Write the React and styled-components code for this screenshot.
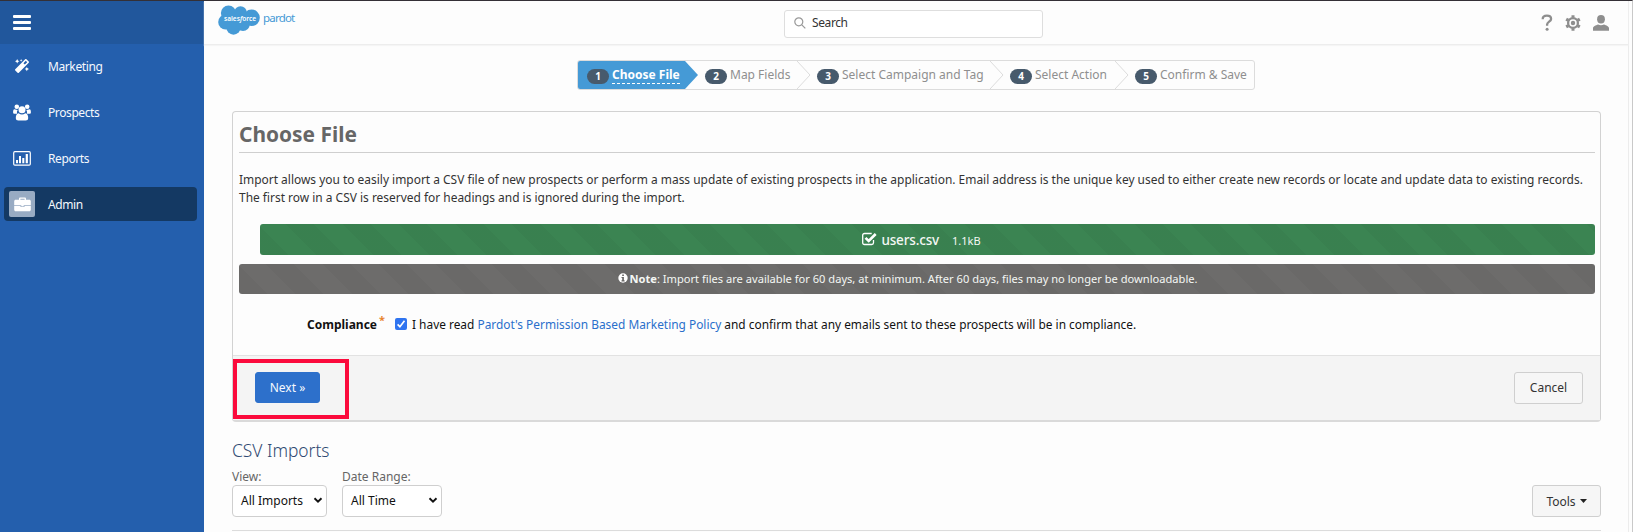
import React from "react";
import styled, { createGlobalStyle, css } from "styled-components";
import { FaMagic } from "react-icons/fa";

const Global = createGlobalStyle`
  * { box-sizing: border-box; }
  html, body { margin: 0; padding: 0; }
  body {
    background: #fdfdfd;
    color: #333;
    font-family: "Noto Sans", sans-serif;
    font-size: 12px;
    overflow: hidden;
  }
  #root { height: 532px; }
`;

const Window = styled.div`
  display: flex;
  height: 532px;
  border-top: 1px solid #343036;
  border-right: 1px solid #c9c9c9;
`;

const Sidebar = styled.aside`
  width: 204px;
  flex: none;
  background: #245fad;
`;

const SidebarTop = styled.div`
  height: 43px;
  padding: 14px 0 0 13px;
  background: #21579c;
`;

const Nav = styled.nav`
  display: flex;
  flex-direction: column;
  gap: 12px;
  padding: 5px 7px 0 4px;
`;

const NavItem = styled.a`
  display: flex;
  align-items: center;
  height: 34px;
  padding-left: 5px;
  border-radius: 4px;
  color: #f4f8fd;
  font-size: 12px;
  letter-spacing: -0.4px;
  background: ${(p) => (p.$active ? "#143963" : "transparent")};
`;

const NavIcon = styled.span`
  display: flex;
  align-items: center;
  justify-content: center;
  width: 26px;
  height: 26px;
  margin-right: 13px;
  border-radius: 2px;
  color: #fff;
  background: ${(p) => (p.$active ? "#98abc3" : "transparent")};
`;

const Main = styled.div`
  flex: 1;
  min-width: 0;
  margin-right: 3px;
  border-right: 1px solid #ececec;
`;

const TopBar = styled.header`
  display: flex;
  align-items: center;
  height: 44px;
  padding: 0 19px 0 14px;
  border-bottom: 1px solid #ededed;
  box-shadow: 0 1px 1px #f5f5f5;
`;

const Brand = styled.div`
  display: flex;
  width: 566px;
  height: 30px;
  margin-top: -5px;
`;

const Product = styled.span`
  margin: 5px 0 0 2px;
  color: #459ad6;
  font-size: 11.5px;
  letter-spacing: -0.8px;
  line-height: 16px;
`;

const SearchBox = styled.div`
  display: flex;
  align-items: center;
  gap: 6px;
  width: 259px;
  height: 28px;
  margin-top: 2px;
  padding: 0 0 2px 9px;
  letter-spacing: -0.4px;
  border: 1px solid #dedede;
  border-radius: 3px;
  background: #fff;
`;

const TopActions = styled.div`
  display: flex;
  align-items: center;
  margin-left: auto;
  gap: 12px;
  color: #8e8e8e;
`;

const Content = styled.main`
  padding: 15px 27px 0 28px;
`;

const Steps = styled.ol`
  display: flex;
  width: 678px;
  height: 30px;
  margin: 0 0 0 345px;
  padding: 0;
  list-style: none;
  border: 1px solid #dcdcdc;
  border-radius: 3px;
  background: #fdfdfd;
  overflow: hidden;
`;

const Step = styled.li`
  display: flex;
  align-items: center;
  width: ${(p) => p.$width}px;
  padding-left: ${(p) => (p.$active ? 9 : 6)}px;
  gap: 3px;
  color: ${(p) => (p.$active ? "#fff" : "#8f8f8f")};
  background: ${(p) => (p.$active ? "#459ad6" : "transparent")};
  white-space: nowrap;
`;

const StepNumber = styled.span`
  width: 22px;
  height: 15px;
  margin-top: 2px;
  border-radius: 8px;
  background: #475a6c;
  color: #fff;
  font-size: 10px;
  font-weight: 700;
  line-height: 15px;
  text-align: center;
`;

const StepLabel = styled.span`
  font-size: 12px;
  line-height: 16px;
  ${(p) =>
    p.$active &&
    css`
      font-weight: 700;
      margin-top: 1px;
      border-bottom: 1px dashed #fff;
    `}
`;

const Card = styled.section`
  margin-top: 21px;
  height: 311px;
  display: flex;
  flex-direction: column;
  border: 1px solid #d2d2d2;
  border-bottom: 2px solid #dadada;
  border-radius: 4px;
`;

const CardBody = styled.div`
  flex: 1;
  padding: 0 5px 0 6px;
`;

const CardTitle = styled.h1`
  height: 41px;
  margin: 0 0 17px;
  padding-top: 7px;
  border-bottom: 1px solid #cfcfcf;
  color: #666;
  font-size: 20.900px;
  line-height: 30px;
  font-weight: 700;
`;

const Intro = styled.p`
  margin: 0;
  font-size: 11.94px;
  line-height: 18px;
  white-space: nowrap;
`;

const Banner = styled.div`
  display: flex;
  align-items: center;
  justify-content: center;
  height: ${(p) => p.$height}px;
  margin: ${(p) => p.$margin};
  padding: 0 ${(p) => p.$inset}px 2px 0;
  border-radius: 3px;
  color: #f4f7f4;
  background-color: ${(p) => p.$color};
  background-image: repeating-linear-gradient(
    45deg,
    rgba(0, 0, 0, 0.03) 0 20px,
    transparent 20px 40px
  );
`;

const FileName = styled.span`
  margin: 2px 0 0 4px;
  font-size: 13.5px;
  letter-spacing: -0.15px;
  font-weight: 500;
`;

const FileSize = styled.span`
  margin: 4px 0 0 13px;
  font-size: 11px;
`;

const Note = styled.span`
  margin-left: 2px;
  font-size: 11.12px;
`;

const Compliance = styled.div`
  display: flex;
  align-items: center;
  height: 18px;
  margin-top: 21px;
  padding-left: 68px;
  color: #111;
  font-size: 12px;
  white-space: nowrap;
`;

const Required = styled.span`
  align-self: flex-start;
  width: 18px;
  padding-left: 2px;
  margin-top: -2px;
  color: #e8832c;
  font-size: 11px;
  font-weight: 700;
  line-height: 14px;
`;

const Check = styled.span`
  display: flex;
  width: 12px;
  height: 12px;
  margin-right: 5px;
  border-radius: 2px;
  background: #2f74f0;
`;

const Consent = styled.span`
  font-size: 11.9px;
`;

const Link = styled.a`
  color: #2a6fcb;
`;

const CardFooter = styled.footer`
  position: relative;
  display: flex;
  align-items: center;
  justify-content: space-between;
  height: 65px;
  padding: 0 17px 1px 22px;
  border-top: 1px solid #e2e2e2;
  background: #f4f4f4;
`;

const Highlight = styled.div`
  position: absolute;
  left: 0;
  top: 3px;
  width: 116px;
  height: 60px;
  border: 4px solid #fb0a3c;
`;

const Button = styled.button`
  display: flex;
  align-items: center;
  justify-content: center;
  gap: 4px;
  width: ${(p) => p.$width}px;
  height: ${(p) => (p.$primary ? 31 : 32)}px;
  padding: 0;
  border: 1px solid ${(p) => (p.$primary ? "#2d70cb" : "#cfcfcf")};
  border-radius: 3px;
  background: ${(p) => (p.$primary ? "#2d70cb" : "#f6f6f6")};
  color: ${(p) => (p.$primary ? "#f4f8fd" : "#333")};
  font-family: inherit;
  font-size: 12px;
`;

const ListTitle = styled.h2`
  margin: 15px 0 0;
  color: #304a72;
  font-size: 17.4px;
  line-height: 26px;
  font-weight: 300;
`;

const Filters = styled.div`
  display: flex;
  align-items: flex-end;
  gap: 15px;
  height: 68px;
  padding-bottom: 13px;
  border-bottom: 1px solid #dcdcdc;
`;

const Field = styled.label`
  display: flex;
  flex-direction: column;
  width: ${(p) => p.$width}px;
  color: #666;
  font-size: 12px;
  line-height: 17px;
`;

const SelectBox = styled.span`
  display: flex;
  align-items: center;
  justify-content: space-between;
  height: 32px;
  padding: 0 3px 1px 8px;
  border: 1px solid #cfcfcf;
  border-radius: 4px;
  background: #fff;
  color: #111;
`;

const Spacer = styled.div`
  flex: 1;
`;

const MenuIcon = () => (
  <svg width="18" height="15" viewBox="0 0 18 15" fill="#fff">
    <rect width="18" height="3" rx="1" />
    <rect y="6" width="18" height="3" rx="1" />
    <rect y="12" width="18" height="3" rx="1" />
  </svg>
);

const PeopleIcon = () => (
  <svg width="18" height="17" viewBox="0 0 18 17" fill="currentColor">
    <circle cx="3.8" cy="2.8" r="2.3" />
    <circle cx="14.2" cy="2.8" r="2.3" />
    <path d="M1.5 5.3C.3 5.5.1 7 .1 8.300c0 1 .5 1.500 1.500 1.500h2.600c-.5-1.300-.3-2.700.6-3.800-1.200 0-2.200-.4-3.300-.7zM16.500 5.300c1.200.2 1.400 1.700 1.400 3 0 1-.5 1.500-1.500 1.500h-2.600c.5-1.300.3-2.700-.6-3.800 1.200 0 2.200-.4 3.300-.7z" />
    <circle cx="9" cy="5.800" r="3.500" />
    <path d="M5.700 9.200c1.900 1.600 4.700 1.600 6.600 0 2.100.1 2.900 2 2.900 4.800 0 1.700-1 2.500-2.500 2.500H5.300c-1.500 0-2.500-.8-2.500-2.500 0-2.800.8-4.700 2.900-4.800z" />
  </svg>
);

const ReportIcon = () => (
  <svg width="18" height="15" viewBox="0 0 18 15" fill="currentColor">
    <rect x=".7" y=".7" width="16.600" height="13.400" rx="1.200" fill="none" stroke="currentColor" strokeWidth="1.200" />
    <path d="M3 9h2v3.200H3zM6 5h2v7.200H6zM9.300 7h2v5.200h-2zM12.700 3h2.200v9.200h-2.200z" />
  </svg>
);

const CaseIcon = () => (
  <svg width="17" height="15" viewBox="0 0 17 15" fill="currentColor">
    <path d="M5 2.800V1.700C5 .9 5.500.4 6.300.4h4.400c.8 0 1.300.5 1.300 1.300v1.100h3.300c.9 0 1.500.6 1.500 1.500v3.900H.2V4.300c0-.9.600-1.500 1.500-1.500zm1.400 0h4.200v-1H6.400z" />
    <path d="M.2 8.900h6.300v1.200h4V8.900h6.300v3.900c0 .9-.6 1.500-1.500 1.500H1.700c-.9 0-1.500-.6-1.500-1.500z" />
    <path d="M7.300 8h2.400v1.400H7.300z" />
  </svg>
);

const CloudLogo = () => (
  <svg width="43" height="30" viewBox="0 0 43 30">
    <g fill="#459ad6">
      <circle cx="10.500" cy="8" r="7.600" />
      <circle cx="22.500" cy="7.500" r="6.300" />
      <circle cx="33.500" cy="12.800" r="8.300" />
      <circle cx="7.600" cy="17" r="7.400" />
      <circle cx="15.500" cy="22.500" r="7.200" />
      <circle cx="25" cy="19.300" r="6.800" />
      <path d="M8 8h26v12H8z" />
    </g>
    <text x="22" y="16.300" textAnchor="middle" fill="#fff" fontSize="6.800" fontWeight="600" fontFamily="Noto Sans, sans-serif" textLength="32" lengthAdjust="spacingAndGlyphs">
      sales<tspan fontStyle="italic">f</tspan>orce
    </text>
  </svg>
);

const SearchIcon = () => (
  <svg width="12" height="12" viewBox="0 0 12 12" fill="none" stroke="#999" strokeWidth="1.200">
    <circle cx="4.800" cy="4.800" r="4" />
    <path d="M7.800 7.800l3.500 3.500" />
  </svg>
);

const HelpIcon = () => (
  <svg width="12" height="17" viewBox="0 0 12 17" fill="none" stroke="currentColor" strokeWidth="2.300">
    <path d="M1.700 5.200C1.700 2.800 3.400 1.700 5.900 1.700S10.100 2.900 10.100 4.900c0 2.700-4 2.900-4 5.700v1.200" />
    <circle cx="6.100" cy="15.200" r="1.500" fill="currentColor" stroke="none" />
  </svg>
);

const GearIcon = () => (
  <svg width="16" height="16" viewBox="0 0 16 16" fill="none" stroke="currentColor">
    <circle cx="8" cy="8" r="4.900" strokeWidth="2.300" />
    <circle cx="8" cy="8" r="2.200" fill="currentColor" stroke="none" />
    <path d="M8 .2v2.500M8 13.300v2.500M1.200 4.100l2.200 1.300M12.600 10.600l2.200 1.300M1.200 11.900l2.200-1.300M12.600 5.400l2.200-1.300" strokeWidth="3" />
  </svg>
);

const PersonIcon = () => (
  <svg width="16" height="16" viewBox="0 0 16 16" fill="currentColor">
    <ellipse cx="8" cy="4.200" rx="3.900" ry="4.200" />
    <path d="M0 15.800v-2.600c0-2 2.700-3 5.100-3.800 1.700 1 4.100 1 5.800 0 2.400.8 5.100 1.800 5.100 3.800v2.600z" />
  </svg>
);

const StepArrow = ({ filled }) => (
  <svg width="14" height="28" viewBox="0 0 14 28">
    {filled ? (
      <path d="M0 0l13 14L0 28z" fill="#459ad6" />
    ) : (
      <path d="M0 0l13 14L0 28" fill="none" stroke="#dcdcdc" />
    )}
  </svg>
);

const CheckedBoxIcon = () => (
  <svg width="15" height="14" viewBox="0 0 15 14" fill="none" stroke="#fff">
    <path d="M11.500 8v2.700c0 1.100-.7 1.800-1.800 1.800H2.500C1.400 12.500.7 11.800.7 10.700V3.300c0-1.100.7-1.800 1.800-1.800h7.200" strokeWidth="1.300" />
    <path d="M3.500 5.800l3.200 3.200 7-7" strokeWidth="2.600" />
  </svg>
);

const InfoIcon = () => (
  <svg width="10" height="10" viewBox="0 0 10 10">
    <circle cx="5" cy="5" r="4.700" fill="#fff" />
    <path d="M4.200 1.500h1.700v1.400H4.200zM3.500 4h2.400v3.300h.7v1.100H3.500V7.300h.7V5.100h-.7z" fill="#686766" />
  </svg>
);

const Tick = () => (
  <svg width="12" height="12" viewBox="0 0 11 11" fill="none" stroke="#fff" strokeWidth="1.500">
    <path d="M2.400 5.800l2.100 2.200 4.200-5.500" />
  </svg>
);

const Chevron = () => (
  <svg width="10" height="7" viewBox="0 0 10 7" fill="none" stroke="#111" strokeWidth="1.900">
    <path d="M1.500 1.300L5 4.700l3.500-3.400" />
  </svg>
);

const Caret = () => (
  <svg width="7" height="4" viewBox="0 0 7 4">
    <path d="M0 0h7L3.500 4z" fill="#222" />
  </svg>
);

const navItems = [
  { label: "Marketing", icon: <FaMagic size={14} /> },
  { label: "Prospects", icon: <PeopleIcon /> },
  { label: "Reports", icon: <ReportIcon /> },
  { label: "Admin", icon: <CaseIcon />, active: true },
];

const steps = [
  { label: "Choose File", width: 107, active: true },
  { label: "Map Fields", width: 98 },
  { label: "Select Campaign and Tag", width: 179 },
  { label: "Select Action", width: 111 },
  { label: "Confirm & Save", width: 125 },
];

export default function App() {
  return (
    <>
      <Global />
      <Window>
        <Sidebar>
          <SidebarTop>
            <MenuIcon />
          </SidebarTop>
          <Nav>
            {navItems.map((item) => (
              <NavItem key={item.label} $active={item.active}>
                <NavIcon $active={item.active}>{item.icon}</NavIcon>
                {item.label}
              </NavItem>
            ))}
          </Nav>
        </Sidebar>
        <Main>
          <TopBar>
            <Brand>
              <CloudLogo />
              <Product>pardot</Product>
            </Brand>
            <SearchBox>
              <SearchIcon />
              <span>Search</span>
            </SearchBox>
            <TopActions>
              <HelpIcon />
              <GearIcon />
              <PersonIcon />
            </TopActions>
          </TopBar>
          <Content>
            <Steps>
              {steps.map((step, i) => (
                <React.Fragment key={step.label}>
                  <Step $width={step.width} $active={step.active}>
                    <StepNumber>{i + 1}</StepNumber>
                    <StepLabel $active={step.active}>{step.label}</StepLabel>
                  </Step>
                  {i < steps.length - 1 && <StepArrow filled={step.active} />}
                </React.Fragment>
              ))}
            </Steps>
            <Card>
              <CardBody>
                <CardTitle>Choose File</CardTitle>
                <Intro>
                  Import allows you to easily import a CSV file of new prospects or perform a mass update of existing prospects in the application. Email address is the unique key used to either create new records or locate and update data to existing records.
                  <br />
                  The first row in a CSV is reserved for headings and is ignored during the import.
                </Intro>
                <Banner $height={31} $color="#3b8452" $margin="18px 0 0 21px" $inset={12}>
                  <CheckedBoxIcon />
                  <FileName>users.csv</FileName>
                  <FileSize>1.1kB</FileSize>
                </Banner>
                <Banner $height={30} $color="#6d6c6b" $margin="9px 0 0 0" $inset={19}>
                  <InfoIcon />
                  <Note>
                    <b>Note</b>: Import files are available for 60 days, at minimum. After 60 days, files may no longer be downloadable.
                  </Note>
                </Banner>
                <Compliance>
                  <b>Compliance</b>
                  <Required>*</Required>
                  <Check>
                    <Tick />
                  </Check>
                  <Consent>
                    I have read <Link>Pardot's Permission Based Marketing Policy</Link> and confirm that any emails sent to these prospects will be in compliance.
                  </Consent>
                </Compliance>
              </CardBody>
              <CardFooter>
                <Button $primary $width={65}>Next »</Button>
                <Button $width={69}>Cancel</Button>
                <Highlight />
              </CardFooter>
            </Card>
            <ListTitle>CSV Imports</ListTitle>
            <Filters>
              <Field $width={95}>
                View:
                <SelectBox>
                  All Imports
                  <Chevron />
                </SelectBox>
              </Field>
              <Field $width={100}>
                Date Range:
                <SelectBox>
                  All Time
                  <Chevron />
                </SelectBox>
              </Field>
              <Spacer />
              <Button $width={69}>
                Tools <Caret />
              </Button>
            </Filters>
          </Content>
        </Main>
      </Window>
    </>
  );
}
